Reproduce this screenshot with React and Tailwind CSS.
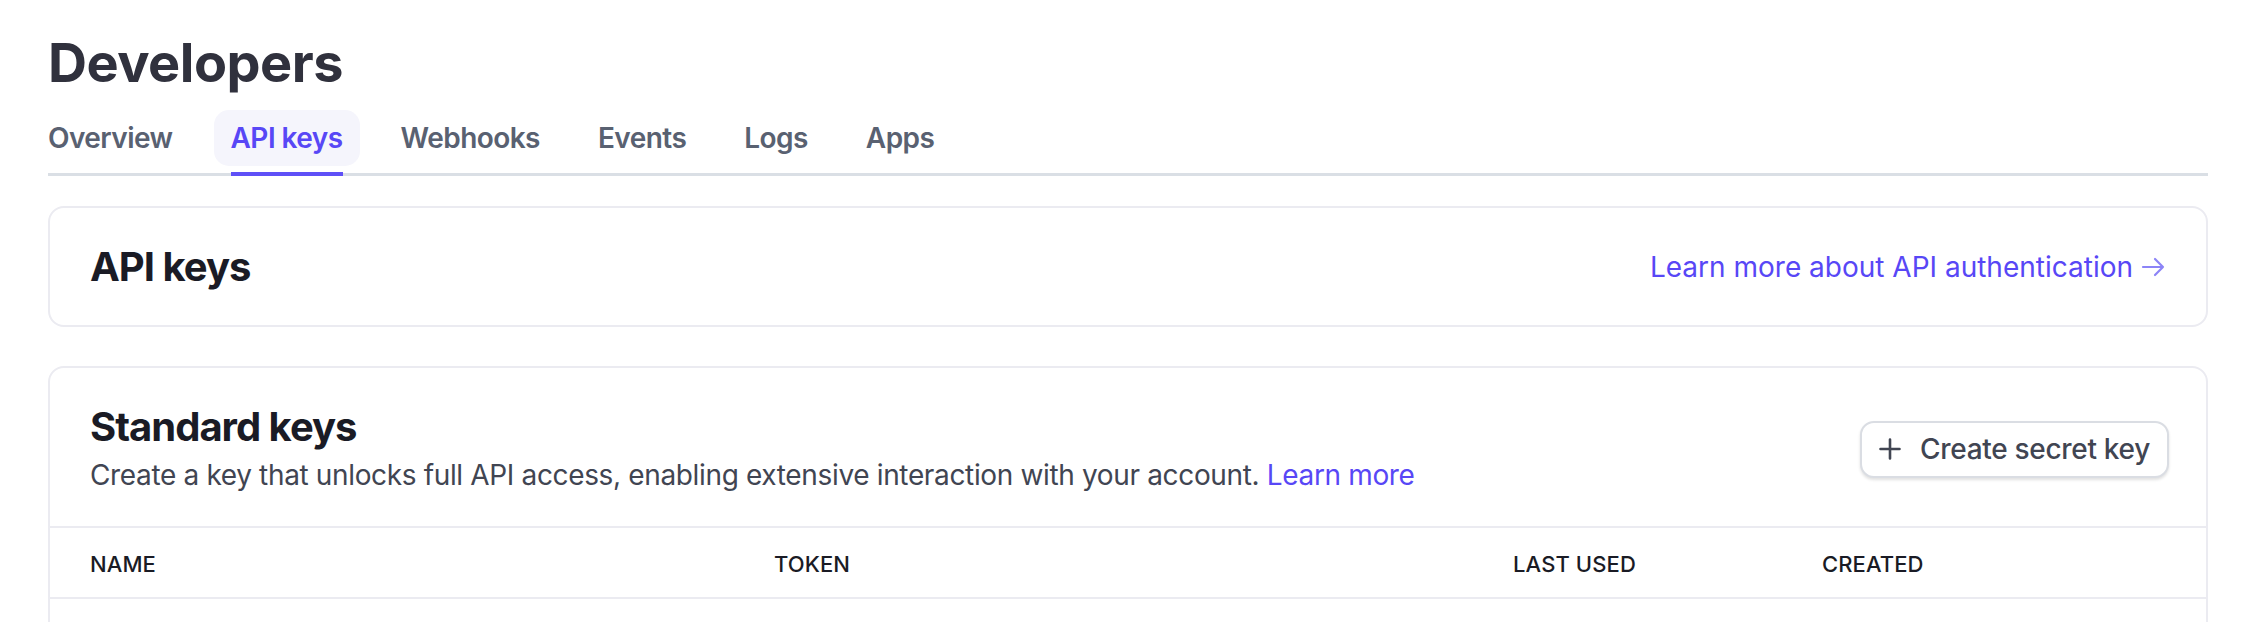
import React from "react";

const TABS = ["Overview", "API keys", "Webhooks", "Events", "Logs", "Apps"];

const PlusIcon = () => (
  <svg width="22" height="22" viewBox="0 0 22 22" fill="none" stroke="#414552" strokeWidth="2.6" strokeLinecap="round">
    <path d="M11 1.5v19M1.5 11h19" />
  </svg>
);

const ArrowIcon = () => (
  <svg width="25" height="22" viewBox="0 0 25 22" fill="none" stroke="#8c84f7" strokeWidth="2.2" strokeLinecap="round" strokeLinejoin="round">
    <path d="M2 11h20M14 3l8 8-8 8" />
  </svg>
);

const Tabs = ({ active }) => (
  <div className="border-b-[3px] border-[#dadfe5]">
    <div className="flex items-end gap-[24px] -ml-[17px]">
      {TABS.map((t) => {
        const on = t === active;
        return (
          <div key={t} className="flex flex-col">
            <div
              className={
                "h-[56px] px-[17px] flex items-center rounded-[15px] text-[28px] font-semibold tracking-[-0.55px] " +
                (on ? "bg-[#f5f5fc] text-[#5847f6]" : "text-[#596171]")
              }
            >
              {t}
            </div>
            <div className={"mt-[6px] mx-[17px] h-[4px] -mb-[3px] " + (on ? "bg-[#5f50f7]" : "bg-transparent")} />
          </div>
        );
      })}
    </div>
  </div>
);

export default function App() {
  return (
    <div
      className="min-h-screen bg-white pl-[48px] pr-[42px] pt-[31px]"
      style={{ fontFamily: "Inter, 'Noto Sans', sans-serif" }}
    >
      <h1 className="text-[54px] leading-[64px] font-bold text-[#30313d] tracking-[-0.5px]">Developers</h1>

      <div className="mt-[15px]">
        <Tabs active="API keys" />
      </div>

      {/* API keys intro card */}
      <div className="mt-[30px] border-2 border-[#ebebf1] rounded-[16px] pl-[40px] pr-[40px] pt-[35px] pb-[34px] flex items-center justify-between">
        <h2 className="text-[40px] leading-[48px] font-bold text-[#1a1b25] tracking-[-1px]">API keys</h2>
        <a className="flex items-center gap-[8px] text-[28px] leading-[40px] text-[#5847f6]">
          Learn more about API authentication
          <ArrowIcon />
        </a>
      </div>

      {/* Standard keys card */}
      <div className="mt-[39px] border-2 border-[#ebebf1] rounded-[16px]">
        <div className="flex items-center justify-between pl-[40px] pr-[37px] pt-[35px] pb-[31px]">
          <div className="flex flex-col gap-[4px]">
            <h2 className="text-[40px] leading-[48px] font-bold text-[#1a1b25] tracking-[-1px]">Standard keys</h2>
            <p className="text-[28px] leading-[40px] text-[#414552] tracking-[-0.35px]">
              Create a key that unlocks full API access, enabling extensive interaction with your account.{" "}
              <a className="text-[#5847f6]">Learn more</a>
            </p>
          </div>
          <button className="h-[57px] flex items-center gap-[19px] pl-[17px] pr-[17px] border-2 border-[#dadde3] rounded-[14px] bg-white shadow-[0_2px_3px_rgba(0,0,0,0.12)] text-[28px] font-medium text-[#414552] tracking-[-0.3px]">
            <PlusIcon />
            Create secret key
          </button>
        </div>
        <div className="grid grid-cols-[684px_739px_309px_1fr] h-[73px] items-center pl-[40px] pt-[3px] border-y-2 border-[#ebebf1] text-[22px] font-medium text-[#1a1b25] tracking-[0.1px]">
          <div>NAME</div>
          <div>TOKEN</div>
          <div>LAST USED</div>
          <div>CREATED</div>
        </div>
        <div className="h-[80px]" />
      </div>
    </div>
  );
}
